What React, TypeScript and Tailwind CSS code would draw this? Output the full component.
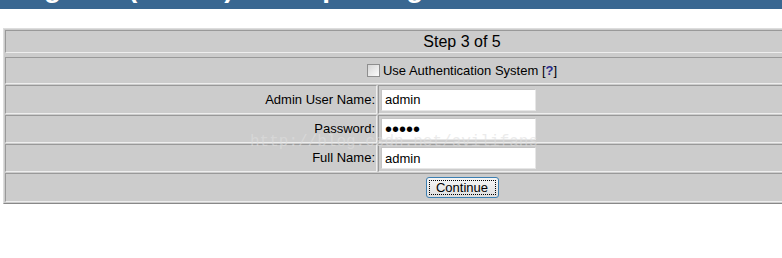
import type { ReactNode } from "react";

/* ── Primitives ─────────────────────────────────────────── */

function Cell({ className = "", children }: { className?: string; children?: ReactNode }) {
  return (
    <div
      className={`bg-[#cccccc] border border-t-[#999999] border-l-[#999999] border-b-[#eeeeee] border-r-[#eeeeee] ${className}`}
    >
      {children}
    </div>
  );
}

function FieldRow({ label, height, children }: { label: string; height: string; children: ReactNode }) {
  return (
    <div className={`flex gap-px ${height}`}>
      <Cell className="w-[372px] flex items-center justify-end pr-px text-[13px]">{label}</Cell>
      <Cell className="flex-1 flex items-center pl-[2px]">{children}</Cell>
    </div>
  );
}

function TextBox({ value, type = "text", size = "text-[13px]" }: { value: string; type?: string; size?: string }) {
  return (
    <input
      readOnly
      type={type}
      value={value}
      className={`w-[155px] h-[22px] bg-white border border-t-[#c4c4c4] border-l-[#c4c4c4] border-b-[#e6e6e6] border-r-[#e6e6e6] pl-[3px] ${size} text-black outline-none font-['Liberation_Sans',Arial,sans-serif]`}
    />
  );
}

/* ── Page ───────────────────────────────────────────────── */

export default function App() {
  return (
    <div className="w-[782px] h-[258px] overflow-hidden bg-white text-black font-['Liberation_Sans',Arial,sans-serif]">
      {/* Title bar, mostly scrolled off */}
      <div className="h-[9px] bg-[#396791] overflow-hidden">
        <div className="mt-[-26px] pl-[5px] text-[28px] leading-[28px] font-bold text-white whitespace-nowrap">
          Magento (Admin) Startup Design
        </div>
      </div>

      {/* Form table */}
      <div className="relative mt-[19px] ml-[3px] w-[918px] border border-t-[#dddddd] border-l-[#dddddd] border-b-[#888888] border-r-[#888888] bg-[#cccccc] p-px flex flex-col gap-px">
        <Cell className="h-[23px] flex items-center justify-center text-[16px]">Step 3 of 5</Cell>

        <Cell className="mt-[3px] h-[27px] flex items-center justify-center text-[13px]">
          <span className="w-[13px] h-[13px] mr-[3px] border border-[#8e8e8e] bg-gradient-to-br from-[#d6d6d6] to-[#fbfbfb]" />
          Use Authentication System [<span className="font-bold text-[#2b2b8c]">?</span>]
        </Cell>

        <FieldRow label="Admin User Name:" height="h-[29px]">
          <TextBox value="admin" />
        </FieldRow>
        <FieldRow label="Password:" height="h-[28px]">
          <TextBox value="admin" type="password" size="text-[20px]" />
        </FieldRow>
        <FieldRow label="Full Name:" height="h-[28px]">
          <TextBox value="admin" />
        </FieldRow>

        <Cell className="h-[29px] flex items-center justify-center">
          <button className="w-[73px] h-[21px] rounded-[3px] border border-[#3c7fb1] bg-gradient-to-b from-[#f7f7f7] to-[#dedede] p-[2px] text-[13px]">
            <span className="flex h-full items-center justify-center border border-dotted border-black leading-none">
              Continue
            </span>
          </button>
        </Cell>

        {/* Watermark */}
        <div className="absolute left-[246px] top-[101px] text-[16px] font-['Liberation_Mono',monospace] text-[#dedede]/60 whitespace-nowrap pointer-events-none">
          http://blog.csdn.net/avilifans
        </div>
      </div>
    </div>
  );
}
